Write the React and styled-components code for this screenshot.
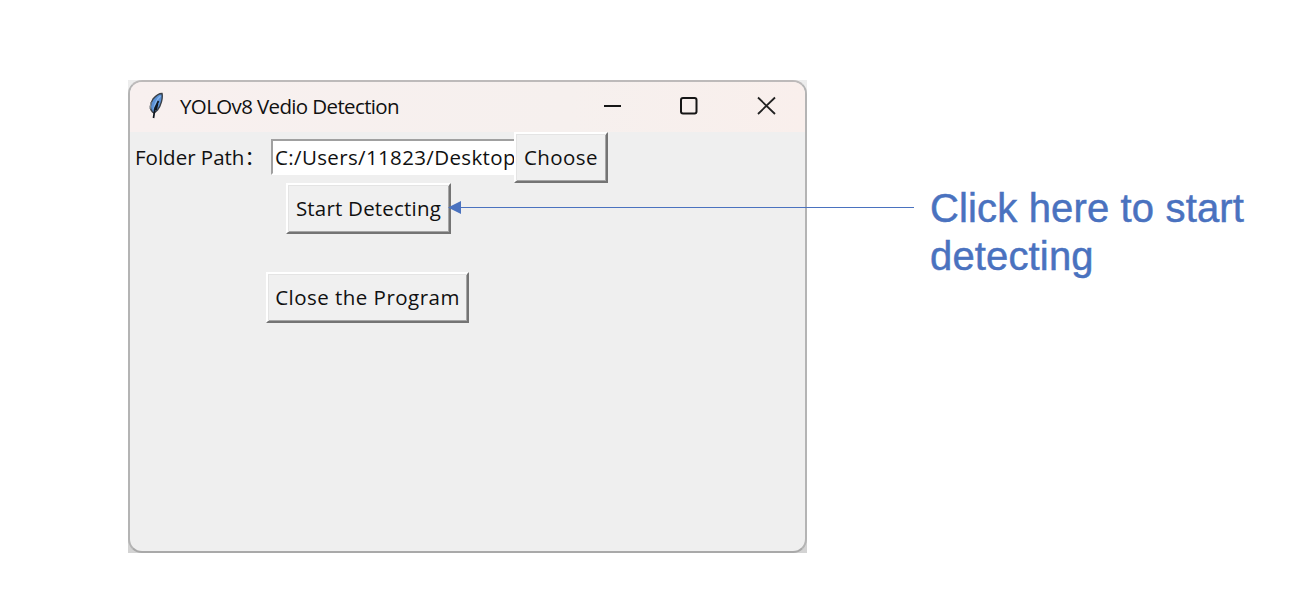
import React from "react";
import styled, { createGlobalStyle } from "styled-components";

const GlobalStyle = createGlobalStyle`
  body { margin: 0; background: #fff; }
  * { box-sizing: border-box; }
`;

const Page = styled.main`
  position: relative;
  display: flex;
  align-items: flex-start;
  width: 1290px;
  height: 600px;
  padding: 80px 0 0 128px;
  overflow: hidden;
`;

const Backdrop = styled.div`
  width: 679px;
  height: 473px;
  background: linear-gradient(#ededed, #d3d3d3);
`;

const Window = styled.section`
  height: 100%;
  border: 2px solid #b4b4b4;
  border-top-color: #bdbaba;
  border-bottom-color: #a9a9a9;
  border-radius: 14px;
  background: #efefef;
  overflow: hidden;
  font-family: "Open Sans", "Noto Sans CJK SC", sans-serif;
  color: #111;
`;

const TitleBar = styled.header`
  display: flex;
  align-items: center;
  height: 50px;
  padding: 0 0 2px 18px;
  background: linear-gradient(90deg, #f8f0ef, #f6f0ee 65%, #f9efec);
`;

const Title = styled.h1`
  flex: 1;
  margin: 0 0 0 15px;
  font-size: 20.5px;
  font-weight: 400;
  line-height: 28px;
  letter-spacing: -0.63px;
  white-space: nowrap;
`;

const Controls = styled.div`
  display: flex;
  gap: 58px;
  margin-right: 29px;
  svg { display: block; }
`;

const FormRow = styled.div`
  display: flex;
  align-items: center;
  height: 51px;
`;

const Label = styled.label`
  width: 141px;
  padding: 0 0 2px 5px;
  font-size: 20.5px;
  line-height: 28px;
  white-space: nowrap;
`;

const Entry = styled.div`
  width: 243px;
  height: 36px;
  margin-bottom: 1px;
  padding-left: 2px;
  border: 2px solid #fff;
  border-top-color: #a0a0a0;
  border-left-color: #a0a0a0;
  border-right: 0;
  background: #fff;
  overflow: hidden;
  font-size: 20.5px;
  line-height: 32px;
  white-space: nowrap;
  letter-spacing: 0.36px;
`;

const Button = styled.button`
  display: flex;
  align-items: center;
  justify-content: center;
  width: ${(p) => p.$width}px;
  height: 51px;
  margin: ${(p) => p.$margin || "0"};
  padding: 0 0 1px;
  border: 2px solid #fff;
  border-right-color: #747474;
  border-bottom-color: #747474;
  box-shadow: inset 1px 1px #e4e4e4, inset -1px -1px #a6a6a6;
  background: #f0f0f0;
  color: #111;
  font-family: inherit;
  font-size: 20.5px;
  line-height: 28px;
  white-space: nowrap;
  letter-spacing: ${(p) => p.$spacing}px;
`;

const Callout = styled.p`
  margin: 104px 0 0 123px;
  color: #4a72bf;
  font-family: "Liberation Sans", Arial, sans-serif;
  font-size: 40px;
  line-height: 48px;
  letter-spacing: 0.15px;
  -webkit-text-stroke: 0.5px #4a72bf;
  white-space: nowrap;
`;

const Arrow = styled.svg`
  position: absolute;
  left: 448px;
  top: 200px;
`;

function Feather() {
  return (
    <svg width="17" height="28" viewBox="0 0 17 28">
      <path d="M4.5 20C1.5 17 2 12 5 7C8 3.5 11 1.5 14 1.5C15 6 13 14 9.5 18L6 21Z" fill="#5b91d5" stroke="#3b4047" strokeWidth="1.4" />
      <path d="M12.5 4C9 7 7 12 6 17" fill="none" stroke="#83b5ee" strokeWidth="1.6" />
      <path d="M10.5 9L7 16L5.5 26M9.5 12L8 18" fill="none" stroke="#111820" strokeWidth="1.7" />
      <path d="M3 10L2 17" stroke="#8a9096" strokeWidth="1.2" />
    </svg>
  );
}

export default function App() {
  return (
    <Page>
      <GlobalStyle />
      <Backdrop>
        <Window>
          <TitleBar>
            <Feather />
            <Title>YOLOv8 Vedio Detection</Title>
            <Controls>
              <svg width="19" height="20" viewBox="0 0 19 20"><path d="M1 10H18" stroke="#161616" strokeWidth="2" /></svg>
              <svg width="19" height="20" viewBox="0 0 19 20"><rect x="1" y="2" width="15.5" height="15.5" rx="2" fill="none" stroke="#161616" strokeWidth="2" /></svg>
              <svg width="19" height="20" viewBox="0 0 19 20"><path d="M1 1.5L18 18M18 1.5L1 18" stroke="#222" strokeWidth="1.8" /></svg>
            </Controls>
          </TitleBar>
          <FormRow>
            <Label>Folder Path：</Label>
            <Entry>C:/Users/11823/Desktop</Entry>
            <Button $width={94} $spacing={0.45}>Choose</Button>
          </FormRow>
          <Button $width={165} $margin="0 0 0 156px" $spacing={0.2}>Start Detecting</Button>
          <Button $width={203} $margin="38px 0 0 136px" $spacing={0.47}>Close the Program</Button>
        </Window>
      </Backdrop>
      <Callout>Click here to start<br />detecting</Callout>
      <Arrow width="467" height="16" viewBox="0 0 467 16">
        <path d="M10 7.5H466" stroke="#4a72bf" />
        <path d="M0 7.5L13 1V14Z" fill="#4a72bf" />
      </Arrow>
    </Page>
  );
}
